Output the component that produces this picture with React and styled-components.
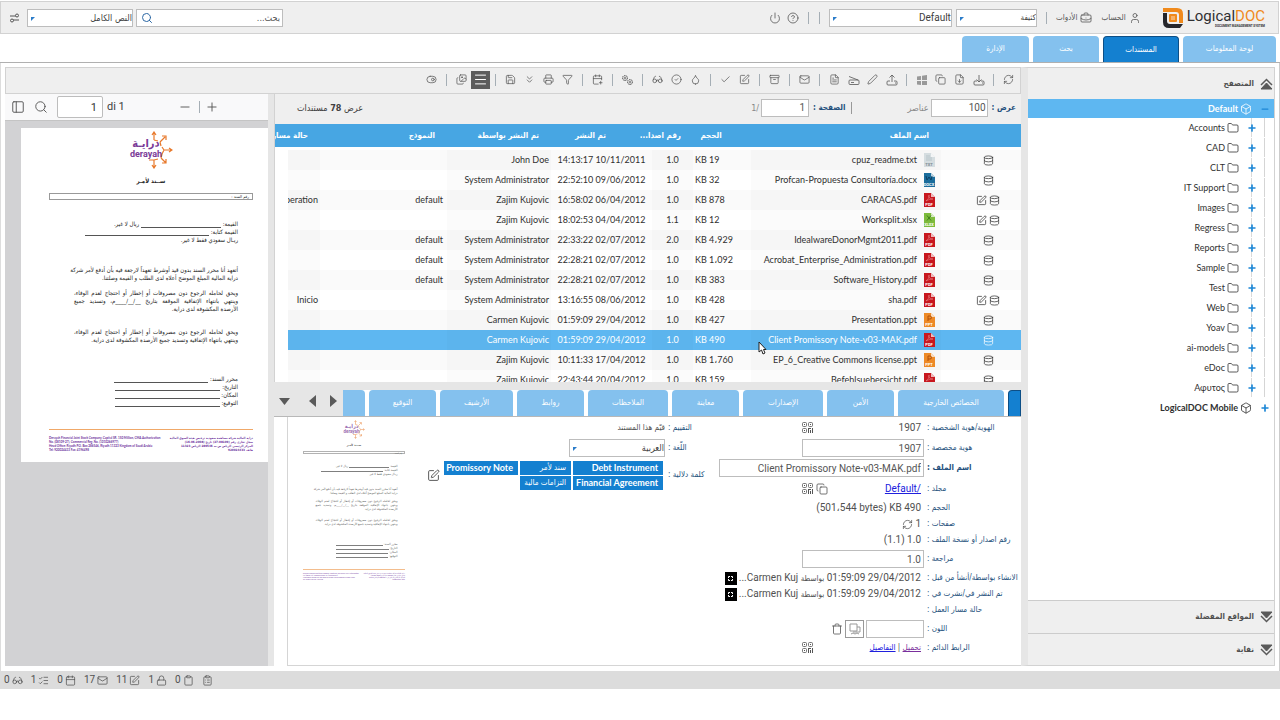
import React, { useState } from "react";
import styled, { createGlobalStyle } from "styled-components";
import {
  Archive,
  BriefcaseBusiness,
  Calendar,
  CalendarPlus,
  Check,
  CircleCheck,
  CircleHelp,
  Clipboard,
  ClipboardList,
  Box,
  ChevronsDown,
  Copy,
  Database,
  Droplet,
  FileDown,
  FileText,
  Folder,
  Funnel,
  Glasses,
  Images,
  ListChecks,
  Lock,
  Mail,
  Menu,
  Minus,
  PanelLeft,
  Pen,
  Plus,
  Power,
  Printer,
  RefreshCw,
  Save,
  Search,
  SquarePen,
  ToggleRight,
  Trash,
  User,
} from "lucide-react";

const lato = `Lato, "DejaVu Sans", sans-serif`;
const roboto = `Roboto, "DejaVu Sans", sans-serif`;
const arabic = `"DejaVu Sans Condensed", "DejaVu Sans", sans-serif`;

const GlobalStyle = createGlobalStyle`
  * {
    box-sizing: border-box;
  }
  body {
    margin: 0;
    background: #fff;
  }
  button, input, select {
    font: inherit;
    color: inherit;
    margin: 0;
  }
  svg {
    flex: none;
  }
`;

const Page = styled.div`
  height: 100vh;
  display: flex;
  flex-direction: column;
  padding: 1px 0 31px;
  font-family: ${arabic};
  font-size: 9px;
  line-height: 12px;
  color: #404040;
  overflow: hidden;
`;

/* ---------- shared controls ---------- */

const IconButton = styled.button`
  width: ${(props) => props.$width || 19}px;
  height: 18px;
  padding: 0;
  border: 0;
  flex: none;
  display: inline-flex;
  align-items: center;
  justify-content: center;
  background: ${(props) => (props.$active ? "#5c5c5c" : "transparent")};
  color: ${(props) => (props.$active ? "#fff" : "#555")};
`;

const Divider = styled.span`
  flex: none;
  width: 11px;
  height: 12px;
  background: linear-gradient(#a5aeb5, #a5aeb5) center / 1px 100% no-repeat;
`;

const TextInput = styled.input`
  width: ${(props) => props.$width}px;
  height: 18px;
  flex: none;
  padding: 0 ${(props) => props.$pad || 1}px;
  border: 1px solid #bdbdbd;
  background: #fff;
  color: #555;
  font-family: ${roboto};
  font-size: ${(props) => props.$size || 10}px;
  text-align: right;
  outline: none;
`;

const SelectBox = styled.span`
  position: relative;
  display: block;
  flex: none;
  width: ${(props) => props.$width}px;
  height: 18px;
  &::after {
    content: "";
    position: absolute;
    left: 4px;
    top: 8px;
    border-top: 4px solid #2b7cc9;
    border-right: 4px solid transparent;
  }
`;

const NativeSelect = styled.select`
  appearance: none;
  width: 100%;
  height: 100%;
  padding: 0;
  border: 1px solid #bdbdbd;
  border-radius: 0;
  background: #fff;
  color: #404040;
  font-family: ${(props) => props.$font || arabic};
  font-size: ${(props) => props.$size || 8}px;
  outline: none;
`;

const SelectField = ({ width, id, label, value, font, size }) => (
  <SelectBox $width={width}>
    <NativeSelect id={id} aria-label={label} $font={font} $size={size}>
      <option>{value}</option>
    </NativeSelect>
  </SelectBox>
);

const Icon = ({ as: Glyph, size = 12 }) => (
  <Glyph size={size} strokeWidth={1.6} />
);

const QrIcon = () => (
  <svg width="12" height="12" viewBox="0 0 12 12" fill="none" stroke="#555">
    <rect x=".5" y=".5" width="4" height="4" rx="1" strokeWidth=".8" />
    <rect x="6.500" y=".5" width="4" height="4" rx="1" strokeWidth=".8" />
    <rect x=".5" y="6.500" width="4" height="4" rx="1" strokeWidth=".8" />
    <path d="M2 2.500h1M8 2.500h1M2 8.500h1M6 6.500h3M6.500 6v5M8.500 8v3M10.500 6v5" />
  </svg>
);

/* ---------- top bar ---------- */

const TopBar = styled.header`
  flex: none;
  height: 33px;
  margin-right: 1px;
  padding: 0 13px 0 4px;
  display: flex;
  align-items: center;
  background: #efefef;
  border: 1px solid #d2d2d2;
`;

const TopLink = styled.button`
  border: 0;
  padding: 0;
  background: none;
  display: flex;
  align-items: center;
  gap: 3px;
  color: #555;
  font-size: 8px;
  white-space: nowrap;
`;

const TopSpacer = styled.div`
  flex: 1;
`;

const LogoWrap = styled.div`
  direction: ltr;
  display: flex;
  align-items: center;
  gap: 3px;
  margin-left: 21px;
`;

const LogoText = styled.div`
  font-family: ${roboto};
  font-size: 15px;
  line-height: 16px;
  color: #2f2f33;
  display: flex;
  flex-direction: column;
  align-items: flex-end;
`;

const LogoAccent = styled.span`
  color: #f08a1c;
`;

const LogoTagline = styled.span`
  font-size: 3px;
  line-height: 4px;
  font-weight: 700;
`;

const SearchBox = styled.div`
  width: 147px;
  height: 18px;
  display: flex;
  align-items: center;
  padding-left: 4px;
  border: 1px solid #bdbdbd;
  background: #fff;
  color: #2d68a5;
`;

const SearchInput = styled.input`
  flex: 1;
  min-width: 0;
  height: 16px;
  border: 0;
  padding: 0 2px;
  background: none;
  outline: none;
  &::placeholder {
    color: #555;
    opacity: 1;
  }
`;

const Group = styled.div`
  display: flex;
  align-items: center;
  gap: ${(props) => props.$gap || 0}px;
  margin-right: ${(props) => props.$offset || 0}px;
`;

const Logo = () => (
  <LogoWrap>
    <svg width="22" height="22" viewBox="0 0 22 22" aria-hidden="true">
      <path d="M1 1h14q6 0 6 6v9h-4V8q0-3-3-3H1z" fill="#f08a1c" />
      <path d="M1 6h4v8q0 3 3 3h13l-3 4H7q-6 0-6-6z" fill="#26262b" />
      <rect x="7" y="7" width="8" height="8" rx="1" fill="#f08a1c" />
      <rect x="9" y="9" width="4" height="4" fill="#fff" opacity=".35" />
    </svg>
    <LogoText>
      <span>
        Logical<LogoAccent>DOC</LogoAccent>
      </span>
      <LogoTagline>DOCUMENT MANAGEMENT SYSTEM</LogoTagline>
    </LogoText>
  </LogoWrap>
);

const SwapIcon = () => (
  <svg width="11" height="10" viewBox="0 0 11 10" fill="none" stroke="#555">
    <path d="M1 3h8M2 7h8" />
    <circle cx="8" cy="2.5" r="1.5" fill="#efefef" />
    <circle cx="3" cy="7.500" r="1.500" fill="#efefef" />
  </svg>
);

/* ---------- main tabs ---------- */

const TabStrip = styled.nav`
  flex: none;
  display: flex;
  align-items: flex-end;
  gap: 4px;
  height: 29px;
  padding-right: 4px;
  border-bottom: 1px solid #b0b0b0;
`;

const Tab = styled.button`
  flex: ${(props) => (props.$grow ? "1" : "none")};
  width: ${(props) => props.$width}px;
  min-width: 0;
  height: 26px;
  padding: 0;
  border: ${(props) => (props.$active ? "1px solid #0d4f86" : "0")};
  border-bottom: 0;
  border-radius: ${(props) => props.$radius || "4px 4px 0 0"};
  background: ${(props) => (props.$active ? "#1480d0" : "#84c1ee")};
  color: #fff;
  font-size: 8px;
  white-space: nowrap;
`;

/* ---------- workspace ---------- */

const Workspace = styled.main`
  flex: 1;
  min-height: 0;
  display: flex;
  padding: 4px 4px 5px;
  border-right: 1px solid #ccc;
  border-left: 1px solid #ddd;
`;

const Side = styled.aside`
  flex: none;
  width: 254px;
  display: flex;
  flex-direction: column;
  border: 1px solid #d2d2d2;
  border-left: 7px solid #e6e6e6;
`;

const SideHeader = styled.button`
  flex: none;
  height: ${(props) => props.$height || 32}px;
  padding: 0 1px;
  display: flex;
  align-items: center;
  gap: 6px;
  border: 0;
  border-top: ${(props) => (props.$line ? "1px solid #ccc" : "0")};
  background: #efefef;
  color: #505050;
  font-size: 8px;
  font-weight: 700;
`;

const Tree = styled.ul`
  flex: 1;
  min-height: 0;
  margin: 0;
  padding: 0;
  list-style: none;
  font-family: ${lato};
  font-size: 9px;
`;

const TreeRow = styled.li`
  height: ${(props) => (props.$root ? 19 : 20)}px;
  display: flex;
  align-items: center;
  gap: 2px;
  padding-right: ${(props) => (props.$root ? 4 : 17)}px;
  background: ${(props) =>
    props.$selected
      ? "#5eb7f1"
      : props.$root
      ? "none"
      : "linear-gradient(#d5d5d5, #d5d5d5) calc(100% - 9px) 0 / 1px 19px no-repeat, linear-gradient(#d9d9d9, #d9d9d9) calc(100% - 22px) 0 / 1px 19px no-repeat"};
  color: ${(props) => (props.$selected ? "#fff" : "#303030")};
  font-weight: ${(props) => (props.$root ? 700 : 400)};
`;

const Expander = styled.button`
  width: 10px;
  height: 12px;
  padding: 0;
  margin-left: 6px;
  border: 0;
  background: none;
  color: #1c87d6;
  display: flex;
  align-items: center;
  justify-content: center;
`;

const folders = [
  "Accounts",
  "CAD",
  "CLT",
  "IT Support",
  "Images",
  "Regress",
  "Reports",
  "Sample",
  "Test",
  "Web",
  "Yoav",
  "ai-models",
  "eDoc",
  "Αφυτος",
];

const SectionArrow = ({ up }) => (
  <svg width="13" height="12" viewBox="0 0 13 12" fill="none" stroke="#5a5a5a">
    {up ? (
      <>
        <path d="M1 7l5.500-5.500L12 7" strokeWidth="1.500" />
        <path d="M1 11l5.500-6L12 11z" fill="#5a5a5a" />
      </>
    ) : (
      <>
        <path d="M1 5l5.500 5.500L12 5" strokeWidth="1.500" />
        <path d="M1 1h11L6.500 7z" fill="#5a5a5a" />
      </>
    )}
  </svg>
);

const Browser = () => (
  <Side>
    <SideHeader $height={31}>
      <SectionArrow up />
      المتصفح
    </SideHeader>
    <Tree>
      <TreeRow $root $selected>
        <Expander aria-label="Default">
          <Minus size={10} strokeWidth={3} />
        </Expander>
        <Icon as={Box} />
        Default
      </TreeRow>
      {folders.map((name) => (
        <TreeRow key={name}>
          <Expander aria-label={name}>
            <Plus size={10} strokeWidth={4} />
          </Expander>
          <Icon as={Folder} />
          {name}
        </TreeRow>
      ))}
      <TreeRow $root>
        <Expander aria-label="LogicalDOC Mobile">
          <Plus size={10} strokeWidth={4} />
        </Expander>
        <Icon as={Box} />
        LogicalDOC Mobile
      </TreeRow>
    </Tree>
    <SideHeader $line $height={33}>
      <SectionArrow />
      المواقع المفضلة
    </SideHeader>
    <SideHeader $line>
      <SectionArrow />
      نفاية
    </SideHeader>
  </Side>
);

/* ---------- toolbar ---------- */

const Documents = styled.section`
  flex: 1;
  min-width: 0;
  display: flex;
  flex-direction: column;
`;

const Toolbar = styled.div`
  flex: none;
  height: 27px;
  padding: 0 2px 2px 0;
  display: flex;
  align-items: center;
  background: #efefef;
  border: 1px solid #d2d2d2;
`;

const WindowsIcon = () => (
  <svg width="10" height="10" viewBox="0 0 10 10" fill="#999">
    <path d="M0 1.500l4-.5v4H0zM5 .8L10 0v5H5zM0 6h4v4l-4-.5zM5 6h5v5l-5-.8z" />
  </svg>
);

const ScannerIcon = () => (
  <svg
    width="12"
    height="12"
    viewBox="0 0 12 12"
    fill="none"
    stroke="#555"
    strokeWidth=".8"
  >
    <path d="M1 2.500L10 6M2 6h8q1 0 1 1v2.500q0 1-1 1H2q-1 0-1-1V7q0-1 1-1zM3 8.500h3" />
  </svg>
);

const TrayIcon = ({ up }) => (
  <svg
    width="12"
    height="12"
    viewBox="0 0 12 12"
    fill="none"
    stroke="#555"
    strokeWidth=".8"
  >
    <path d="M4 7H2q-1 0-1 1v2q0 1 1 1h8q1 0 1-1V8q0-1-1-1H8M9 9h1" />
    <path d={up ? "M6 8V1M3.500 3.500L6 1l2.500 2.500" : "M6 1v7M3.500 5.500L6 8l2.500-2.500"} />
  </svg>
);

const UploadIcon = () => <TrayIcon up />;

const GearsIcon = () => (
  <svg width="13" height="12" viewBox="0 0 13 12" fill="none" stroke="#555">
    <circle cx="4" cy="4" r="2.500" strokeDasharray="1.5 .6" />
    <circle cx="9" cy="8" r="2.500" strokeDasharray="1.5 .6" />
    <circle cx="4" cy="4" r="1" strokeWidth=".7" />
    <circle cx="9" cy="8" r="1" strokeWidth=".7" />
  </svg>
);

const tools = [
  ["refresh", RefreshCw],
  null,
  ["download", TrayIcon],
  ["pdf", FileDown],
  ["copy", Copy],
  ["office", WindowsIcon],
  null,
  ["upload", UploadIcon],
  ["sign", Pen],
  ["scan", ScannerIcon],
  ["new", FileText],
  null,
  ["mail", Mail],
  null,
  ["archive", Archive],
  null,
  ["edit", SquarePen],
  ["check", Check],
  null,
  ["stamp", Droplet],
  ["approve", CircleCheck],
  ["read", Glasses],
  null,
  ["automation", GearsIcon],
  null,
  ["calendar", CalendarPlus],
  null,
  ["filter", Funnel],
  ["print", Printer],
  ["more", ChevronsDown],
  ["save", Save],
  null,
  ["list", Menu],
  ["gallery", Images],
  null,
  ["toggle", ToggleRight],
];

/* ---------- pdf preview ---------- */

const Split = styled.div`
  flex: 1;
  min-height: 0;
  display: flex;
`;

const Preview = styled.section`
  direction: ltr;
  flex: none;
  width: 263px;
  display: flex;
  flex-direction: column;
  background: #d2d2d4;
`;

const PreviewBar = styled.div`
  flex: none;
  height: 27px;
  display: flex;
  align-items: center;
  padding-left: 4px;
  background: #f9f9fa;
  border-bottom: 1px solid #c4c4c4;
  font-family: ${roboto};
  font-size: 11px;
`;

const PreviewInput = styled(TextInput)`
  height: 22px;
  margin: 0 4px 0 2px;
  padding-right: 5px;
  border-radius: 2px;
  color: #333;
`;

const PageCount = styled.span`
  flex: 1;
`;

const ZoomButtons = styled.div`
  display: flex;
  align-items: center;
  margin-right: 49px;
`;

const PreviewBody = styled.div`
  flex: 1;
  min-height: 0;
  padding: 7px 0 0 16px;
  overflow: hidden;
`;

const Sheet = styled.article`
  width: 258px;
  height: 334px;
  padding: 3px 26px 0 28px;
  background: #fff;
  direction: rtl;
  color: #222;
  font-size: 6px;
  line-height: 8px;
`;

const SheetLogo = styled.svg`
  display: block;
  margin: 0 auto;
`;

const SheetTitle = styled.div`
  margin-top: 8px;
  text-align: center;
  font-weight: 700;
`;

const SheetBox = styled.div`
  height: 7px;
  margin-top: 8px;
  padding: 0 3px;
  border: 1px solid #999;
  font-size: 4px;
  line-height: 5px;
`;

const SheetPart = styled.div`
  margin: ${(props) => props.$top}px 15px 0 25px;
`;

const SheetLine = styled.div`
  white-space: nowrap;
  text-align: right;
  text-align-last: ${(props) => (props.$fill ? "justify" : "right")};
`;

const SheetBlank = styled.span`
  display: inline-block;
  width: ${(props) => props.$width}px;
  height: 7px;
  border-bottom: 1px solid #555;
  vertical-align: bottom;
`;

const SheetFooter = styled.div`
  display: flex;
  justify-content: space-between;
  margin-top: 22px;
  padding-top: 6px;
  border-top: 1px solid #f0a868;
  color: #6c2f9c;
  font-size: 3px;
  line-height: 4px;
  font-weight: 700;
  white-space: nowrap;
`;

const FooterText = styled.div`
  direction: ${(props) => props.$dir};
  font-family: ${(props) => (props.$dir === "ltr" ? lato : arabic)};
`;

const Letter = () => (
  <Sheet>
    <SheetLogo width="44" height="38" viewBox="0 0 44 38">
      <g stroke="#e8792b" strokeWidth="1.200" fill="none">
        <path d="M25 9V2M23 4l2-3 2 3M31 11l5-5M33 5h4v4M35 19h7M40 17l3 2-3 2M32 27l5 5M33 32h4v-4M25 29v7M23 34l2 3 2-3M25 9l4 1M31 11l1 4M35 19l-2-3M35 19l-2 4M32 27l1-4M25 29l4-1M25 29h-5" />
      </g>
      <text
        x="17"
        y="16"
        textAnchor="middle"
        fontSize="11"
        fontWeight="700"
        fontFamily="DejaVu Sans Condensed"
        fill="#7a3b97"
      >
        درايـة
      </text>
      <text
        x="17"
        y="26"
        textAnchor="middle"
        fontSize="9"
        fontWeight="700"
        fontFamily="Roboto"
        fill="#7a3b97"
      >
        derayah
      </text>
    </SheetLogo>
    <SheetTitle>ســند لأمـر</SheetTitle>
    <SheetBox>رقم السند :</SheetBox>
    <SheetPart $top={20}>
      <SheetLine>
        القيمة: <SheetBlank $width={80} /> ريال لا غير.
      </SheetLine>
      <SheetLine>
        القيمة كتابة: <SheetBlank $width={124} />
      </SheetLine>
      <SheetLine>ريـال سعودي فقط لا غير.</SheetLine>
    </SheetPart>
    <SheetPart $top={22}>
      <SheetLine $fill>
        أتعهد أنا محرر السند بدون قيد أوشرط تعهداً لارجعة فيه بأن أدفع لأمر شركة
      </SheetLine>
      <SheetLine>
        دراية المالية المبلغ الموضح أعلاه لدى الطلب و القيمة وصلتنا.
      </SheetLine>
    </SheetPart>
    <SheetPart $top={7}>
      <SheetLine $fill>
        ويحق لحامله الرجوع دون مصروفات أو إخطار أو احتجاج لعدم الوفاء،
      </SheetLine>
      <SheetLine $fill>
        وينتهي بانتهاء الإتفاقية الموقعة بتاريخ __/__/____م، وتسديد جميع
      </SheetLine>
      <SheetLine>الأرصدة المكشوفة لدى دراية.</SheetLine>
    </SheetPart>
    <SheetPart $top={15}>
      <SheetLine $fill>
        ويحق لحامله الرجوع دون مصروفات أو إخطار أو احتجاج لعدم الوفاء،
      </SheetLine>
      <SheetLine>
        وينتهي بانتهاء الإتفاقية وتسديد جميع الأرصدة المكشوفة لدى دراية.
      </SheetLine>
    </SheetPart>
    <SheetPart $top={31}>
      <SheetLine>
        محرر السند: <SheetBlank $width={94} />
      </SheetLine>
      <SheetLine>
        التاريخ: <SheetBlank $width={105} />
      </SheetLine>
      <SheetLine>
        المكان: <SheetBlank $width={105} />
      </SheetLine>
      <SheetLine>
        التوقيع: <SheetBlank $width={105} />
      </SheetLine>
    </SheetPart>
    <SheetFooter>
      <FooterText $dir="rtl">
        دراية المالية شركة مساهمة سعودية ترخيص هيئة السوق المالية
        <br />
        سجل تجاري رقم (08109-27) تاريخ (2008-06-16)
        <br />
        المركز الرئيسي الرياض ص.ب 286546 الرياض 11323
        <br />
        هاتف 920024433
      </FooterText>
      <FooterText $dir="ltr">
        Derayah Financial Joint Stock Company, Capital SR. 150 Million, CMA Authorization
        <br />
        No. (08109-27), Commercial Reg. No. (1010266977)
        <br />
        Head Office: Riyadh P.O. Box 286546, Riyadh 11323 Kingdom of Saudi Arabia
        <br />
        Tel: 920024433 Fax: 4196498
      </FooterText>
    </SheetFooter>
  </Sheet>
);

const PdfViewer = () => (
  <Preview>
    <PreviewBar>
      <IconButton aria-label="sidebar" $width={18}>
        <Icon as={PanelLeft} size={14} />
      </IconButton>
      <IconButton aria-label="find" $width={28}>
        <Icon as={Search} size={14} />
      </IconButton>
      <PreviewInput aria-label="page" $width={46} $size={11} defaultValue="1" />
      <PageCount>di 1</PageCount>
      <ZoomButtons>
        <IconButton aria-label="zoom out">
          <Icon as={Minus} size={14} />
        </IconButton>
        <Divider />
        <IconButton aria-label="zoom in" $width={14}>
          <Icon as={Plus} size={14} />
        </IconButton>
      </ZoomButtons>
    </PreviewBar>
    <PreviewBody>
      <Letter />
    </PreviewBody>
  </Preview>
);

/* ---------- document list ---------- */

const Center = styled.div`
  flex: 1;
  min-width: 0;
  display: flex;
  flex-direction: column;
  border-left: 6px solid #e6e6e6;
  background: #fff;
`;

const ListPane = styled.section`
  position: relative;
  flex: 1;
  min-height: 0;
  display: flex;
  flex-direction: column;
  overflow: hidden;
  border-left: 1px solid #d2d2d2;
`;

const Pager = styled.div`
  flex: none;
  height: 30px;
  padding: 0 5px 3px 0;
  display: flex;
  align-items: center;
  gap: 2px;
  background: #efefef;
  color: #888;
`;

const PagerLabel = styled.label`
  color: #24507c;
  margin-left: 2px;
  font-size: 8px;
  font-weight: 700;
`;

const PagerSep = styled.span`
  width: 1px;
  height: 12px;
  margin: 0 53px 0 4px;
  background: #999;
`;

const PagerTotal = styled.span`
  margin: 0 auto 0 22px;
  color: #404040;
`;

const HeadBand = styled.div`
  flex: none;
  height: 23px;
  padding-right: 10px;
  background: #47a6e3;
  overflow: hidden;
`;

const BodyClip = styled.div`
  flex: 1;
  min-height: 0;
  margin-left: 13px;
  padding-top: 3px;
  overflow: hidden;
`;

const Grid = styled.table`
  width: 100%;
  table-layout: fixed;
  border-collapse: collapse;
  font-family: ${lato};
  font-size: 9px;
`;

const HeadCell = styled.th`
  height: 23px;
  padding: 0 2px 0 0;
  text-align: ${(props) => props.$align || "right"};
  color: #fff;
  font-family: ${arabic};
  font-size: 8px;
  font-weight: 700;
  white-space: nowrap;
`;

const Row = styled.tr`
  height: 20px;
  color: ${(props) => (props.$selected ? "#fff" : "#303030")};
  background: ${(props) =>
    props.$selected ? "#5eb7f1" : props.$odd ? "#fafafa" : "#fff"};
`;

const Cell = styled.td`
  height: 20px;
  padding: ${(props) => props.$padding || "0 2px"};
  direction: ltr;
  text-align: ${(props) => props.$align || "right"};
  white-space: nowrap;
  overflow: hidden;
  background: ${(props) => (props.$shade ? "rgba(0, 0, 0, 0.016)" : "none")};
`;

const CellLine = styled.div`
  display: flex;
  align-items: center;
  justify-content: ${(props) => props.$justify || "flex-end"};
  gap: ${(props) => props.$gap}px;
`;

const Cursor = styled.svg`
  position: absolute;
  left: 483px;
  top: 247px;
`;

const columns = [
  { width: 80, title: "" },
  { width: 190, title: "اسم الملف" },
  { width: 58, title: "الحجم", align: "center" },
  { width: 41, title: "رقم اصدا..." },
  { width: 101, title: "تم النشر", align: "center" },
  { width: 104, title: "تم النشر بواسطة" },
  { width: 127, title: "النموذج" },
  { title: "حالة مسار العمل" },
];

const docs = [
  ["cpuz_readme.txt", "19", "1.0", "14:13:17 10/11/2011", "John Doe"],
  ["Profcan-Propuesta Consultoría.docx", "32", "1.0", "22:52:10 09/06/2012", "System Administrator"],
  ["CARACAS.pdf", "878", "1.0", "16:58:02 06/04/2012", "Zajim Kujovic", "default", "Operation", true],
  ["Worksplit.xlsx", "12", "1.1", "18:02:53 04/04/2012", "Zajim Kujovic", "", "", true],
  ["IdealwareDonorMgmt2011.pdf", "4،929", "2.0", "22:33:22 02/07/2012", "System Administrator", "default"],
  ["Acrobat_Enterprise_Administration.pdf", "1،092", "1.0", "22:28:21 02/07/2012", "System Administrator", "default"],
  ["Software_History.pdf", "383", "1.0", "22:28:21 02/07/2012", "System Administrator", "default"],
  ["sha.pdf", "428", "1.0", "13:16:55 08/06/2012", "System Administrator", "", "Inicio", true],
  ["Presentation.ppt", "427", "1.0", "01:59:09 29/04/2012", "Carmen Kujovic"],
  ["Client Promissory Note-v03-MAK.pdf", "490", "1.0", "01:59:09 29/04/2012", "Carmen Kujovic"],
  ["EP_6_Creative Commons license.ppt", "1،760", "1.0", "10:11:33 17/04/2012", "Zajim Kujovic"],
  ["Befehlsuebersicht.pdf", "159", "1.0", "22:43:44 20/04/2012", "Zajim Kujovic"],
];

const fileColors = {
  txt: "#d5dde0",
  docx: "#1b6d9c",
  pdf: "#c8171e",
  xlsx: "#7dbb3c",
  ppt: "#ee8a26",
};

const FileIcon = ({ name }) => {
  const ext = name.split(".").pop();
  const ink = ext === "txt" ? "#7c8b92" : "#fff";
  return (
    <svg width="11" height="14" viewBox="0 0 11 14" aria-hidden="true">
      <path d="M0 0h7l4 4v10H0z" fill={fileColors[ext]} />
      <path d="M7 0l4 4H7z" fill="#fff" opacity=".7" />
      {ext === "pdf" && (
        <path
          d="M2 8q4-3 3-6-1 4 4 4-4 0-7 2"
          fill="none"
          stroke="#fff"
          strokeWidth=".5"
          opacity=".5"
        />
      )}
      {ext === "xlsx" && <path d="M3 2.500l4 5M7 2.500l-4 5" stroke="#3f7f1c" />}
      {ext === "docx" && <path d="M2 3l1 4 2-3 2 3 1-4" fill="none" stroke="#0b3f63" />}
      {ext === "ppt" && <path d="M4 8V3h2q1.500 0 1.500 1.500T6 6H4" fill="none" stroke="#b1500a" />}
      {ext === "txt" && <path d="M2 3h4M2 5h6M2 7h6" stroke="#aeb9be" strokeWidth=".7" />}
      <text
        x="5"
        y="13"
        fontSize="4"
        fontWeight="700"
        fontFamily="Roboto"
        textAnchor="middle"
        fill={ink}
      >
        {ext.toUpperCase()}
      </text>
    </svg>
  );
};

const Columns = () => (
  <colgroup>
    {columns.map((column, i) => (
      <col key={i} width={column.width} />
    ))}
  </colgroup>
);

const DocumentList = () => (
  <ListPane>
    <Pager>
      <PagerLabel htmlFor="max">عرض :</PagerLabel>
      <TextInput id="max" $width={57} dir="ltr" defaultValue="100" />
      <span>عناصر</span>
      <PagerSep />
      <PagerLabel htmlFor="pageno">الصفحة :</PagerLabel>
      <TextInput id="pageno" $width={48} $pad={3} dir="ltr" defaultValue="1" />
      <span>/1</span>
      <PagerTotal>
        عرض <b>78</b> مستندات
      </PagerTotal>
    </Pager>
    <HeadBand>
      <Grid>
        <Columns />
        <thead>
          <tr>
            {columns.map((column, i) => (
              <HeadCell key={i} $align={column.align}>
                {column.title}
              </HeadCell>
            ))}
          </tr>
        </thead>
      </Grid>
    </HeadBand>
    <BodyClip>
      <Grid>
        <Columns />
        <tbody>
          {docs.map(([name, size, version, date, by, template, flow, edited], i) => (
            <Row key={name} $odd={i % 2 === 0} $selected={i === 9}>
              <Cell $padding="0 0 0 14px">
                <CellLine $justify="center" $gap={2}>
                  {edited && <Icon as={SquarePen} size={11} />}
                  <Icon as={Database} size={11} />
                </CellLine>
              </Cell>
              <Cell $shade $padding="0 6px 0 0">
                <CellLine $gap={7}>
                  {name}
                  <FileIcon name={name} />
                </CellLine>
              </Cell>
              <Cell $align="left">KB {size}</Cell>
              <Cell $shade $align="center">
                {version}
              </Cell>
              <Cell $align="center">{date}</Cell>
              <Cell $shade>{by}</Cell>
              <Cell $padding="0 4px">{template}</Cell>
              <Cell $shade>
                <CellLine>{flow}</CellLine>
              </Cell>
            </Row>
          ))}
        </tbody>
      </Grid>
    </BodyClip>
    <Cursor width="9" height="14" viewBox="0 0 9 14">
      <path d="M1 1v10l2.500-2 1.500 4 2-1-1.500-3.500H8z" fill="#fff" stroke="#222" />
    </Cursor>
  </ListPane>
);

/* ---------- document details ---------- */

const DetailTabs = styled.nav`
  flex: none;
  height: 35px;
  padding-top: 8px;
  display: flex;
  background: #e6e6e6;
  border-bottom: 1px solid #b8b8b8;
`;

const DetailTabList = styled.div`
  flex: 1;
  min-width: 0;
  display: flex;
  gap: 4px;
  background: #fff;
`;

const Arrows = styled.div`
  flex: none;
  width: 69px;
  padding: 0 6px 4px 0;
  display: flex;
  align-items: center;
  justify-content: space-between;
`;

const Details = styled.section`
  flex: none;
  display: flex;
  margin-left: 13px;
  padding: 1px 0 9px;
  border: solid #d5d5d5;
  border-width: 0 0 1px 1px;
`;

const Form = styled.div`
  flex: none;
  width: ${(props) => props.$width}px;
  min-width: 0;
`;

const Field = styled.div`
  display: grid;
  grid-template-columns: ${(props) => props.$label}px minmax(0, 1fr);
  align-items: center;
  min-height: ${(props) => props.$height || 16}px;
`;

const FieldLabel = styled.label`
  padding-left: 3px;
  text-align: left;
  white-space: nowrap;
  color: #24507c;
  font-size: 8px;
  font-weight: ${(props) => (props.$bold ? 700 : 400)};
`;

const Value = styled.div`
  display: flex;
  align-items: center;
  gap: 2px;
  width: ${(props) => props.$width}px;
  padding-right: ${(props) => (props.$flush ? 0 : 3)}px;
  justify-content: ${(props) => (props.$spread ? "space-between" : "flex-start")};
  font-family: ${roboto};
  font-size: 10px;
  color: #505050;
  white-space: nowrap;
`;

const Small = styled.span`
  font-family: ${arabic};
  font-size: 8px;
`;

const Link = styled.a`
  color: ${(props) => (props.$visited ? "#7a2f9c" : "#2020dd")};
  text-decoration: underline;
`;

const Expand = styled.button`
  width: 13px;
  height: 13px;
  padding: 0;
  border: 0;
  background: #000;
  display: flex;
  align-items: center;
  justify-content: center;
`;

const PickerButton = styled(IconButton)`
  border: 1px solid #999;
  color: #999;
`;

const Tags = styled.div`
  display: grid;
  grid-template-columns: 90px 51px 74px;
  gap: 1px 2px;
`;

const Tag = styled.button`
  height: 14px;
  padding: 0 5px;
  border: 0;
  background: #1480d0;
  color: #fff;
  font-family: ${(props) => (props.$arabic ? arabic : lato)};
  font-size: ${(props) => (props.$arabic ? 8 : 9)}px;
  font-weight: ${(props) => (props.$arabic ? 400 : 700)};
  line-height: 12px;
  text-align: right;
  white-space: nowrap;
`;

const Thumb = styled.div`
  flex: none;
  width: 131px;
  margin-right: auto;
  padding-left: 1px;
  direction: ltr;
  overflow: hidden;
  opacity: 0.75;
`;

const ThumbZoom = styled.div`
  zoom: 50%;
`;

const ExpandIcon = () => (
  <svg width="5" height="5" viewBox="0 0 5 5" fill="none" stroke="#fff">
    <path d="M.5 2V.5H2M3 .5h1.500V2M4.500 3v1.500H3M2 4.500H.5V3" />
  </svg>
);

const PickerIcon = () => (
  <svg width="12" height="12" viewBox="0 0 12 12" fill="none" stroke="#999">
    <path d="M1 1h7v7H1zM8 4h3v5H4M2 11l2-1 2 1 2-1 2 1" />
  </svg>
);

const detailTabs = [
  ["الخصائص الخارجية", 106],
  ["الأمن", 67],
  ["الإصدارات", 80],
  ["معاينة", 67],
  ["الملاحظات", 80],
  ["روابط", 67],
  ["الأرشيف", 73],
  ["التوقيع", 67],
];

const Stamp = () => (
  <Value $spread $width={199}>
    <bdi dir="rtl">
      29/04/2012 01:59:09 <Small>بواسطة</Small> Carmen Kuj...
    </bdi>
    <Expand aria-label="expand">
      <ExpandIcon />
    </Expand>
  </Value>
);

const DocumentDetails = () => (
  <>
    <DetailTabs>
      <DetailTabList>
        <Tab $width={13} $active $radius="4px 0 0 0" aria-label="الخصائص" />
        {detailTabs.map(([title, width]) => (
          <Tab key={title} $width={width}>
            {title}
          </Tab>
        ))}
        <Tab $grow $radius="0 4px 0 0" aria-label="المزيد" />
      </DetailTabList>
      <Arrows>
        <svg width="7" height="12" viewBox="0 0 7 12" fill="#5a5a5a">
          <path d="M0 0l7 6-7 6z" />
        </svg>
        <svg width="7" height="12" viewBox="0 0 7 12" fill="#5a5a5a">
          <path d="M7 0L0 6l7 6z" />
        </svg>
        <svg width="20" height="7" viewBox="0 0 20 7" fill="#5a5a5a">
          <path d="M5 0h11l-5.500 7z" />
        </svg>
      </Arrows>
    </DetailTabs>
    <Details>
      <Form $width={302}>
        <Field $label={97} $height={20}>
          <FieldLabel>الهوية/هوية الشخصية :</FieldLabel>
          <Value $spread $width={122}>
            1907
            <QrIcon />
          </Value>
        </Field>
        <Field $label={97} $height={20}>
          <FieldLabel htmlFor="cid">هوية مخصصة :</FieldLabel>
          <TextInput id="cid" $width={122} $pad={2} dir="ltr" defaultValue="1907" />
        </Field>
        <Field $label={97} $height={20}>
          <FieldLabel htmlFor="fname" $bold>
            اسم الملف :
          </FieldLabel>
          <TextInput
            id="fname"
            $width={205}
            $pad={2}
            dir="ltr"
            defaultValue="Client Promissory Note-v03-MAK.pdf"
          />
        </Field>
        <Field $label={97} $height={22}>
          <FieldLabel>مجلد :</FieldLabel>
          <Value $spread $width={122}>
            <Link href="#folder" dir="ltr">
              Default/
            </Link>
            <Group $gap={2}>
              <Icon as={Copy} />
              <QrIcon />
            </Group>
          </Value>
        </Field>
        <Field $label={97}>
          <FieldLabel>الحجم :</FieldLabel>
          <Value>
            <bdi dir="ltr">(501،544 bytes) KB 490</bdi>
          </Value>
        </Field>
        <Field $label={97}>
          <FieldLabel>صفحات :</FieldLabel>
          <Value>
            1<Icon as={RefreshCw} size={11} />
          </Value>
        </Field>
        <Field $label={97}>
          <FieldLabel>رقم اصدار أو نسخة الملف :</FieldLabel>
          <Value>
            <bdi dir="ltr">(1.1) 1.0</bdi>
          </Value>
        </Field>
        <Field $label={97} $height={22}>
          <FieldLabel htmlFor="rev">مراجعة :</FieldLabel>
          <TextInput id="rev" $width={122} $pad={2} dir="ltr" defaultValue="1.0" />
        </Field>
        <Field $label={97}>
          <FieldLabel>الانشاء بواسطة/أنشأ من قبل :</FieldLabel>
          <Stamp />
        </Field>
        <Field $label={97}>
          <FieldLabel>تم النشر في/نشرت في :</FieldLabel>
          <Stamp />
        </Field>
        <Field $label={97}>
          <FieldLabel>حالة مسار العمل :</FieldLabel>
        </Field>
        <Field $label={97} $height={22}>
          <FieldLabel htmlFor="color">اللون :</FieldLabel>
          <Value $flush>
            <TextInput id="color" $width={58} />
            <PickerButton aria-label="pick" $width={19}>
              <PickerIcon />
            </PickerButton>
            <IconButton aria-label="clear" $width={12}>
              <Icon as={Trash} />
            </IconButton>
          </Value>
        </Field>
        <Field $label={97}>
          <FieldLabel>الرابط الدائم :</FieldLabel>
          <Value $spread $width={122}>
            <Small>
              <Link href="#download" $visited>
                تحميل
              </Link>{" "}
              | <Link href="#details">التفاصيل</Link>
            </Small>
            <QrIcon />
          </Value>
        </Field>
      </Form>
      <Form $width={292}>
        <Field $label={54} $height={20}>
          <FieldLabel>التقييم :</FieldLabel>
          <Value $flush>
            <Small>قيّم هذا المستند</Small>
          </Value>
        </Field>
        <Field $label={54} $height={20}>
          <FieldLabel htmlFor="lang">اللّغة :</FieldLabel>
          <SelectField id="lang" width={96} value="العربية" size={9} />
        </Field>
        <Field $label={54} $height={34}>
          <FieldLabel>كلمة دلالية :</FieldLabel>
          <Group $gap={4} $offset={2}>
            <Tags>
              <Tag>Debt Instrument</Tag>
              <Tag $arabic>سند لأمر</Tag>
              <Tag>Promissory Note</Tag>
              <Tag>Financial Agreement</Tag>
              <Tag $arabic>التزامات مالية</Tag>
            </Tags>
            <Icon as={SquarePen} size={13} />
          </Group>
        </Field>
      </Form>
      <Thumb aria-hidden="true">
        <ThumbZoom>
          <Letter />
        </ThumbZoom>
      </Thumb>
    </Details>
  </>
);

/* ---------- status bar ---------- */

const StatusBar = styled.footer`
  flex: none;
  height: 18px;
  direction: ltr;
  display: flex;
  align-items: center;
  gap: 8px;
  padding-left: 4px;
  background: #dcdcdc;
  font-family: ${roboto};
  font-size: 10px;
  color: #505050;
`;

const StatusItem = styled.span`
  display: flex;
  align-items: center;
  gap: 2px;
`;

const counters = [
  ["0", Glasses],
  ["1", ListChecks],
  ["0", Calendar],
  ["17", Mail],
  ["11", SquarePen],
  ["1", Lock],
  ["0", Clipboard],
  ["", ClipboardList],
];

const App = () => {
  const [view, setView] = useState("list");

  return (
    <Page dir="rtl">
      <GlobalStyle />
      <TopBar>
        <Logo />
        <TopLink>
          <Icon as={User} />
          الحساب
        </TopLink>
        <Group $gap={4} $offset={9}>
          <TopLink>
            <Icon as={BriefcaseBusiness} />
            الأدوات
          </TopLink>
          <Divider />
          <SelectField label="الكثافة" width={81} value="كثيفة" />
          <SelectField label="Tenant" width={123} value="Default" font={roboto} size={10} />
          <Divider />
        </Group>
        <Divider />
        <IconButton aria-label="help" $width={20}>
          <Icon as={CircleHelp} />
        </IconButton>
        <IconButton aria-label="logout" $width={16}>
          <Icon as={Power} />
        </IconButton>
        <TopSpacer />
        <Group $gap={3}>
          <SearchBox>
            <SearchInput aria-label="بحث" placeholder="بحث..." />
            <Search size={12} />
          </SearchBox>
          <SelectField label="نوع البحث" width={106} value="النص الكامل" size={9} />
          <IconButton aria-label="options">
            <SwapIcon />
          </IconButton>
        </Group>
      </TopBar>
      <TabStrip>
        <Tab $width={93}>لوحة المعلومات</Tab>
        <Tab $width={76} $active>
          المستندات
        </Tab>
        <Tab $width={66}>بحث</Tab>
        <Tab $width={67}>الإدارة</Tab>
      </TabStrip>
      <Workspace>
        <Browser />
        <Documents>
          <Toolbar>
            {tools.map((tool, i) =>
              tool ? (
                <IconButton
                  key={tool[0]}
                  aria-label={tool[0]}
                  $active={tool[0] === view}
                  onClick={() => setView(tool[0] === "gallery" ? "gallery" : "list")}
                >
                  <Icon as={tool[1]} size={tool[0] === "list" ? 15 : 11} />
                </IconButton>
              ) : (
                <Divider key={i} />
              )
            )}
          </Toolbar>
          <Split>
            <Center>
              <DocumentList />
              <DocumentDetails />
            </Center>
            <PdfViewer />
          </Split>
        </Documents>
      </Workspace>
      <StatusBar>
        {counters.map(([count, glyph], i) => (
          <StatusItem key={i}>
            {count}
            <Icon as={glyph} size={11} />
          </StatusItem>
        ))}
      </StatusBar>
    </Page>
  );
};

export default App;
